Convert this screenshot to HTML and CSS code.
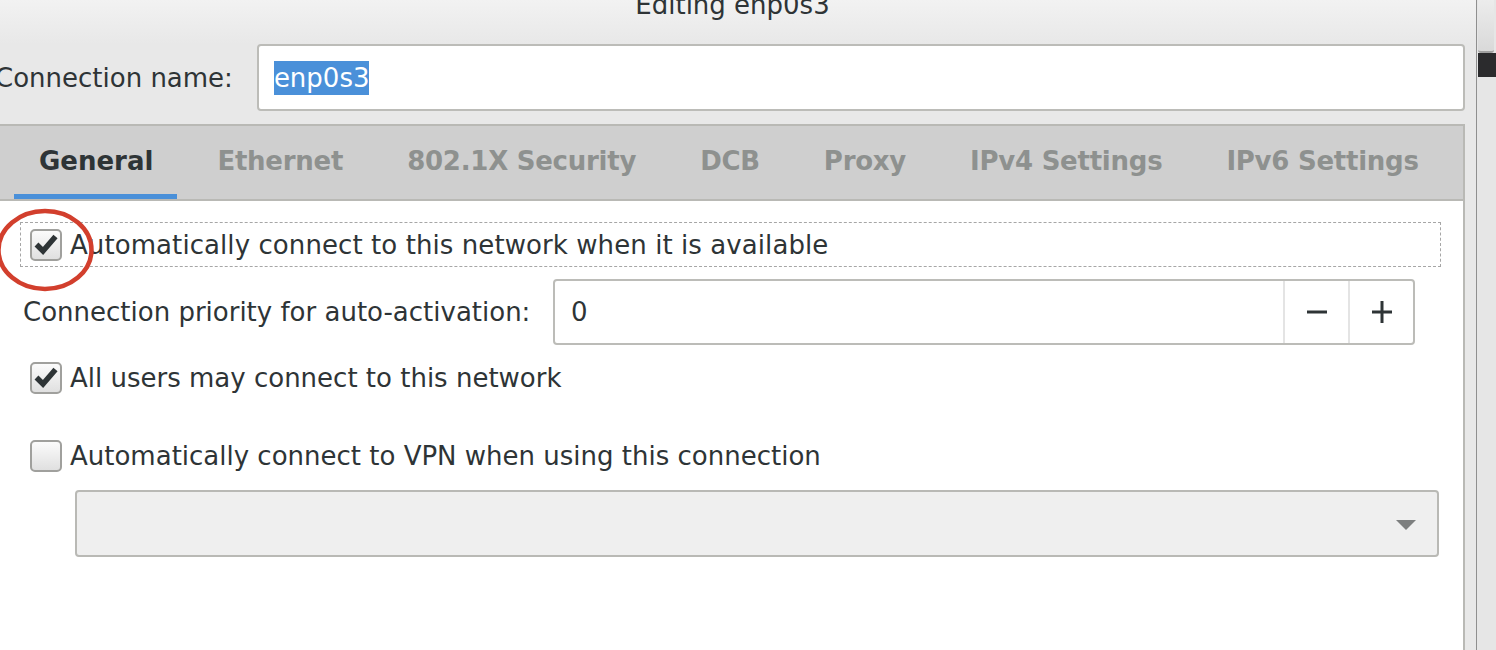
FILE: index.html
```html
<!DOCTYPE html>
<html>
<head>
<meta charset="utf-8">
<title>Editing enp0s3</title>
<link rel="stylesheet" href="styles.css">
</head>
<body>
<div class="screen">
  <div class="dialog">
    <div class="titlebar"><span class="title">Editing enp0s3</span></div>
    <div class="name-row">
      <span class="name-label">Connection name:</span>
      <div class="entry"><span class="selection">enp0s3</span></div>
    </div>
    <div class="notebook">
      <div class="tabs">
        <div class="tab active">General</div>
        <div class="tab">Ethernet</div>
        <div class="tab">802.1X Security</div>
        <div class="tab">DCB</div>
        <div class="tab">Proxy</div>
        <div class="tab">IPv4 Settings</div>
        <div class="tab">IPv6 Settings</div>
      </div>
      <div class="page">
        <div class="check-row focus">
          <span class="checkbox"><svg width="28" height="28" viewBox="0 0 28 28"><path d="M4.5 13.5 L11 20 L23.5 5.5" fill="none" stroke="#2e3436" stroke-width="5.5"/></svg></span>
          <span class="check-label">Automatically connect to this network when it is available</span>
        </div>
        <div class="priority-row">
          <span class="priority-label">Connection priority for auto-activation:</span>
          <div class="spin">
            <span class="spin-value">0</span>
            <span class="spin-btn"><svg width="20" height="20" viewBox="0 0 20 20"><path d="M0 10 H20" stroke="#2e3436" stroke-width="3"/></svg></span>
            <span class="spin-btn"><svg width="20" height="24" viewBox="0 0 20 24"><path d="M0 12 H20 M10 1 V23" stroke="#2e3436" stroke-width="3"/></svg></span>
          </div>
        </div>
        <div class="check-row plain users">
          <span class="checkbox"><svg width="28" height="28" viewBox="0 0 28 28"><path d="M4.5 13.5 L11 20 L23.5 5.5" fill="none" stroke="#2e3436" stroke-width="5.5"/></svg></span>
          <span class="check-label">All users may connect to this network</span>
        </div>
        <div class="check-row plain vpn">
          <span class="checkbox"></span>
          <span class="check-label">Automatically connect to VPN when using this connection</span>
        </div>
        <div class="combo"><svg class="combo-arrow" width="20" height="10" viewBox="0 0 20 10"><path d="M0 0 H20 L10 10 Z" fill="#7d7f7f"/></svg></div>
      </div>
    </div>
  </div>
  <div class="scrollbar">
    <div class="thumb"></div>
    <div class="dark-block"></div>
  </div>
  <svg class="annotation" width="100" height="300" viewBox="0 0 100 300"><ellipse cx="45" cy="250" rx="46.5" ry="39" fill="none" stroke="#d23f2d" stroke-width="4.5"/></svg>
</div>
</body>
</html>
```

FILE: styles.css
```css
html, body {
  margin: 0;
  padding: 0;
}

body {
  font-family: "DejaVu Sans", "Liberation Sans", sans-serif;
  font-size: 26px;
  color: #2e3436;
  background: #ffffff;
}

.screen {
  position: relative;
  display: flex;
  width: 1496px;
  height: 650px;
  overflow: hidden;
}

.dialog {
  width: 1476px;
  flex: none;
  border-right: 1px solid #8f8f8f;
  background: #e8e8e8;
  display: flex;
  flex-direction: column;
}

.titlebar {
  height: 44px;
  flex: none;
  line-height: 10px;
  text-align: center;
  padding-right: 11px;
  background: linear-gradient(#f2f2f2, #e8e8e8 44px);
}

.name-row {
  display: flex;
  align-items: center;
  gap: 24px;
  width: 1465px;
  height: 67px;
  flex: none;
}

.name-label {
  margin-left: -5px;
  line-height: 28px;
  white-space: nowrap;
}

.entry {
  flex: 1;
  height: 67px;
  box-sizing: border-box;
  border: 2px solid #bcbcb8;
  border-radius: 4px;
  background: #ffffff;
  display: flex;
  align-items: center;
  padding-left: 15px;
}

.selection {
  background: #4a90d9;
  color: #ffffff;
  line-height: 34px;
}

.notebook {
  margin-top: 13px;
  width: 1465px;
  box-sizing: border-box;
  border-right: 2px solid #b9b9b5;
  flex: 1;
  background: #ffffff;
  display: flex;
  flex-direction: column;
}

.tabs {
  height: 77px;
  flex: none;
  box-sizing: border-box;
  border-top: 2px solid #b9b9b5;
  border-bottom: 2px solid #b9b9b5;
  background: #cfcfcf;
  display: flex;
  padding-left: 14px;
  gap: 15px;
}

.tab {
  height: 73px;
  box-sizing: border-box;
  padding: 20px 24px 0 25px;
  line-height: 30px;
  font-weight: bold;
  letter-spacing: -0.25px;
  color: #8e918f;
  border-bottom: 5px solid transparent;
  white-space: nowrap;
}

.tab.active {
  color: #2e3436;
  letter-spacing: 0;
  border-bottom-color: #4a90d9;
}

.page {
  padding-top: 21px;
}

.check-row {
  display: flex;
  align-items: center;
  gap: 8px;
  height: 44px;
}

.check-row.focus {
  margin-left: 20px;
  width: 1421px;
  height: 45px;
  box-sizing: border-box;
  border: 1px dashed #a6a6a6;
  padding-left: 9px;
}

.check-row.focus .check-label {
  letter-spacing: 0.08px;
}

.check-row.plain {
  padding-left: 30px;
}

.check-row.users {
  margin-top: 11px;
}

.check-row.vpn {
  margin-top: 34px;
}

.checkbox {
  width: 32px;
  height: 32px;
  flex: none;
  box-sizing: border-box;
  border: 2px solid #a0a09d;
  border-radius: 5px;
  background: linear-gradient(#fbfbfb, #e0e0e0);
  display: flex;
  align-items: center;
  justify-content: center;
}

.check-label {
  line-height: 30px;
  white-space: nowrap;
}

.priority-row {
  margin-top: 12px;
  display: flex;
  align-items: center;
  gap: 25px;
  padding-left: 23px;
}

.priority-label {
  width: 505px;
  flex: none;
  line-height: 30px;
  white-space: nowrap;
}

.spin {
  width: 862px;
  height: 66px;
  flex: none;
  box-sizing: border-box;
  border: 2px solid #bcbcb8;
  border-radius: 4px;
  background: #ffffff;
  display: flex;
  align-items: stretch;
}

.spin-value {
  flex: 1;
  padding-left: 16px;
  line-height: 62px;
}

.spin-btn {
  width: 65px;
  flex: none;
  box-sizing: border-box;
  border-left: 2px solid #e4e4e4;
  display: flex;
  align-items: center;
  justify-content: center;
}

.combo {
  margin-top: 12px;
  margin-left: 75px;
  width: 1364px;
  height: 67px;
  box-sizing: border-box;
  border: 2px solid #b9b9b5;
  border-radius: 4px;
  background: #efefef;
  display: flex;
  align-items: center;
  justify-content: flex-end;
  padding-right: 21px;
}

.combo-arrow {
  margin-top: 3px;
}

.scrollbar {
  width: 19px;
  flex: none;
  background: #e6e6e6;
}

.thumb {
  margin-left: 1px;
  width: 16px;
  height: 51px;
  background: linear-gradient(#ececec, #d9d9d9);
  border-bottom: 2px solid #a0a0a0;
  border-radius: 0 0 3px 3px;
}

.dark-block {
  margin-left: 1px;
  height: 24px;
  background: #2b2b2d;
}

.annotation {
  position: absolute;
  left: 0;
  top: 0;
  pointer-events: none;
}
```
